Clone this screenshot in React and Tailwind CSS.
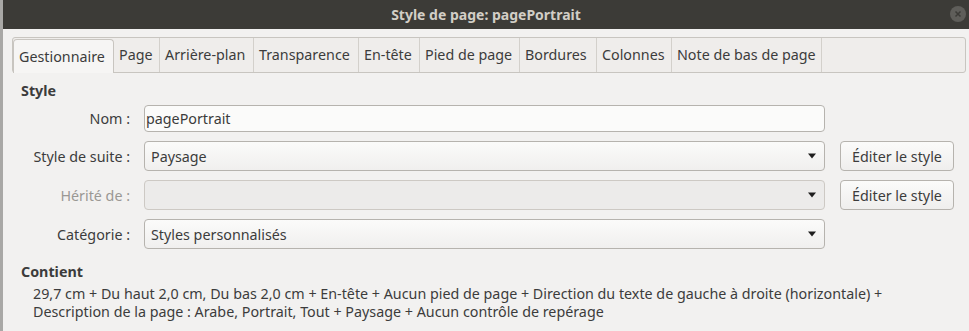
import React from 'react';

const tabs = [
  ['Gestionnaire', 'w-[101px]'],
  ['Page', 'w-[46px]'],
  ['Arrière-plan', 'w-[94px]'],
  ['Transparence', 'w-[105px]'],
  ['En-tête', 'w-[61px]'],
  ['Pied de page', 'w-[100px]'],
  ['Bordures', 'w-[77px]'],
  ['Colonnes', 'w-[75px]'],
  ['Note de bas de page', 'w-[150px]'],
];

const font = { fontFamily: '"Noto Sans", "Open Sans", sans-serif' };

function Caret() {
  return (
    <svg width="10" height="6" viewBox="0 0 10 6" className="shrink-0">
      <path d="M1 0.5 H9 L5 5.5 Z" fill="#1e1e1e" />
    </svg>
  );
}

function Combo({ value, disabled }) {
  return (
    <div
      className={`flex h-[30px] flex-1 items-center justify-between rounded-[4px] border pl-[6px] pr-[7px] ${
        disabled
          ? 'border-[#cdc9c4] bg-[#ecebea]'
          : 'border-[#b6b3ae] bg-gradient-to-b from-[#fbfbfa] to-[#f0efee]'
      }`}
    >
      <span>{value}</span>
      <Caret />
    </div>
  );
}

function EditButton() {
  return (
    <button className="h-[30px] w-[114px] rounded-[4px] border border-[#b6b3ae] bg-gradient-to-b from-[#fbfbfa] to-[#efeeed] text-[#3c3c3c]">
      Éditer le style
    </button>
  );
}

function Row({ label, dim, children, button }) {
  return (
    <div className="flex items-center">
      <div className={`w-[141px] shrink-0 pr-[14px] text-right ${dim ? 'text-[#9a9894]' : ''}`}>{label}</div>
      <div className="flex w-[681px] shrink-0">{children}</div>
      <div className="ml-[15px] w-[114px] shrink-0">{button && <EditButton />}</div>
    </div>
  );
}

export default function App() {
  return (
    <div className="flex h-[331px] w-[969px] overflow-hidden bg-[#f2f1f0] text-[14.3px] text-[#3c3c3c]" style={font}>
      <div className="w-[3px] shrink-0 bg-[#a9a8a6]" />
      <div className="flex flex-1 flex-col">
        <div className="relative flex h-[29px] shrink-0 items-center justify-center bg-[#3c3b37]">
          <span className="text-[14px] font-bold text-[#d2cec6]">Style de page: pagePortrait</span>
          <div className="absolute right-[3px] top-[6px] flex h-[16px] w-[16px] items-center justify-center rounded-full bg-[#5f5e5a]">
            <svg width="8" height="8" viewBox="0 0 8 8">
              <path d="M1.5 1.5 L6.5 6.5 M6.5 1.5 L1.5 6.5" stroke="#3c3b37" strokeWidth="1.5" />
            </svg>
          </div>
        </div>

        <div className="ml-[9px] mr-[3px] mt-[8px] flex h-[36px] shrink-0 items-end rounded-[3px] border border-[#c8c5c0] bg-[#efedeb]">
          {tabs.map(([t, w], i) =>
            i === 0 ? (
              <div
                key={t}
                className={`${w} -mb-px flex h-[34px] shrink-0 items-center rounded-t-[4px] border border-b-0 border-[#c8c5c0] bg-[#f6f5f4] pl-[5px]`}
              >
                {t}
              </div>
            ) : (
              <div
                key={t}
                className={`${w} flex h-[34px] shrink-0 items-center whitespace-nowrap border-r border-[#d3d0cb] pl-[5px]`}
              >
                {t}
              </div>
            )
          )}
        </div>

        <div className="ml-[18px] mt-[7px] font-bold">Style</div>

        <div className="mt-[4px] flex flex-col gap-[9px]">
          <div className="flex items-center">
            <div className="w-[141px] shrink-0 pr-[14px] text-right">Nom :</div>
            <div className="flex h-[27px] w-[681px] items-center rounded-[4px] border border-[#b6b3ae] bg-[#fbfbfa] pl-[1px]">
              pagePortrait
            </div>
          </div>
          <Row label="Style de suite :" button>
            <Combo value="Paysage" />
          </Row>
          <Row label="Hérité de :" dim button>
            <Combo value="" disabled />
          </Row>
          <Row label="Catégorie :">
            <Combo value="Styles personnalisés" />
          </Row>
        </div>

        <div className="ml-[18px] mt-[12px] font-bold">Contient</div>
        <div className="ml-[30px] mt-[2px] leading-[18px]">
          <div>29,7 cm + Du haut 2,0 cm, Du bas 2,0 cm + En-tête + Aucun pied de page + Direction du texte de gauche à droite (horizontale) +</div>
          <div>Description de la page : Arabe, Portrait, Tout + Paysage + Aucun contrôle de repérage</div>
        </div>
      </div>
    </div>
  );
}
